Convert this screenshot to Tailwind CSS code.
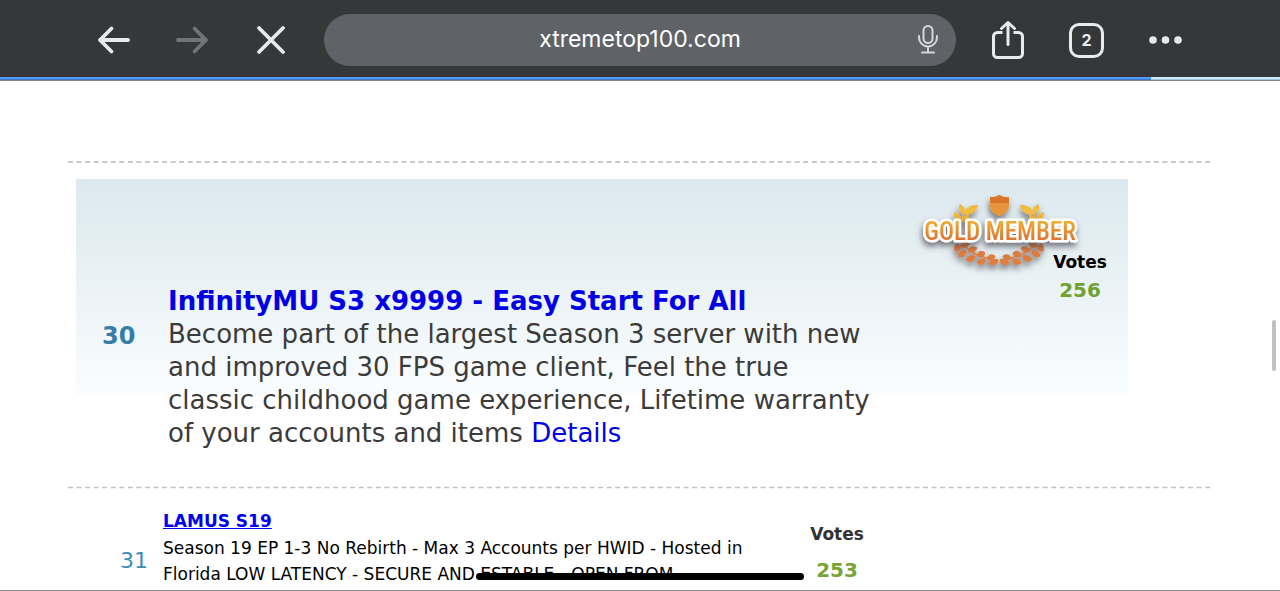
<!DOCTYPE html>
<html lang="en">
<head>
    <meta charset="UTF-8">
    <meta name="viewport" content="width=device-width, initial-scale=1.0">
    <title>xtremetop100.com</title>
    <script src="https://cdn.jsdelivr.net/npm/@tailwindcss/browser@4"></script>
</head>
<body class="relative h-screen overflow-hidden flex flex-col bg-white font-['Verdana','DejaVu_Sans',sans-serif]">

    <!-- Browser toolbar -->
    <header class="shrink-0 bg-[#363739] text-[#e8eaed]">
      <div class="flex items-center h-[77px] pt-[3px] pl-[97px] pr-[97px]">
        <button type="button" aria-label="Back">
          <svg class="w-[33px] h-8" viewBox="0 0 33 32" fill="none" stroke="currentColor" stroke-width="3.8" stroke-linecap="round" stroke-linejoin="round">
            <path d="M31 16H3M14.500 4.500L3 16l11.500 11.500"/>
          </svg>
        </button>
        <button type="button" aria-label="Forward" class="ml-[46px] text-[#737476]" disabled>
          <svg class="w-[33px] h-8" viewBox="0 0 33 32" fill="none" stroke="currentColor" stroke-width="3.8" stroke-linecap="round" stroke-linejoin="round">
            <path d="M2 16h28M18.500 4.500L30 16 18.500 27.500"/>
          </svg>
        </button>
        <button type="button" aria-label="Stop" class="ml-[46px]">
          <svg class="w-8 h-8" viewBox="0 0 32 32" fill="none" stroke="currentColor" stroke-width="3.8" stroke-linecap="round">
            <path d="M4 4l24 24M28 4L4 28"/>
          </svg>
        </button>
        <div class="flex-1 flex items-center h-[52px] ml-[37px] pr-4 rounded-full bg-[#5f6267]">
          <input type="text" aria-label="Address" value="xtremetop100.com"
                 class="flex-1 min-w-0 pl-[40px] pb-[3px] text-center text-[23px] leading-8 text-white font-['Inter','Roboto',sans-serif] outline-none">
          <button type="button" aria-label="Voice search">
            <svg class="w-[24px] h-[32px]" viewBox="0 0 24 32" fill="none" stroke="#d5d7da" stroke-width="2" stroke-linecap="round">
              <rect x="7.500" y="2" width="9" height="17" rx="4.500"/>
              <path d="M3 12v1.500a9 9 0 0 0 18 0V12M12 22.500V28M6 28.500h12"/>
            </svg>
          </button>
        </div>
        <button type="button" aria-label="Share" class="ml-[34px]">
          <svg class="w-9 h-10" viewBox="0 0 36 40" fill="none" stroke="currentColor" stroke-width="3" stroke-linecap="round" stroke-linejoin="round">
            <path d="M12.500 12.500H7.500a4 4 0 0 0-4 4v17a4 4 0 0 0 4 4h21a4 4 0 0 0 4-4v-17a4 4 0 0 0-4-4h-5" stroke-linecap="butt"/>
            <path d="M18 24.500V3M11.500 8.500L18 2.500l6.500 6"/>
          </svg>
        </button>
        <button type="button" aria-label="Tabs"
                class="flex items-center justify-center w-[35px] h-[35px] ml-[43px] border-[3px] border-[#e8eaed] rounded-[10px] text-base font-bold font-['Inter','Roboto',sans-serif]">2</button>
        <button type="button" aria-label="More" class="ml-[44px]">
          <svg class="w-[35px] h-4" viewBox="0 0 35 16" fill="currentColor">
            <circle cx="5" cy="8" r="3.800"/><circle cx="17.500" cy="8" r="3.800"/><circle cx="30" cy="8" r="3.800"/>
          </svg>
        </button>
      </div>
      <!-- Page load progress -->
      <div class="h-[3px] bg-linear-to-b from-[#c8eafc] from-50% to-[#8fb0c4]">
        <div class="h-full bg-linear-to-b from-[#4f9bfb] from-50% to-[#2f68b4]" style="width: 89.900%"></div>
      </div>
      <div class="h-px bg-[#8a8480]"></div>
    </header>

    <main class="flex-1 min-h-0 pt-[79px] pl-[68px] pr-[70px] overflow-hidden border-b border-[#888]">
      <svg class="block w-full h-[3px]"><line x1="0" y1="2" x2="100%" y2="2" stroke="#c9cac2" stroke-width="2" stroke-dasharray="5 3.550"/></svg>

      <!-- Rank 30 -->
      <article class="flex mt-4 ml-2 mr-[82px] h-[307px] bg-[linear-gradient(#dce9f0,#e6f0f3_80px,#f0f6f9_145px,#fafdff_216px,transparent_216px)]">
        <div class="shrink-0 w-[92px] pt-[139px] pl-[26px] text-2xl leading-[36px] font-bold text-[#347ea8]">30</div>
        <div class="flex-1 pt-[106px] text-[26px] leading-[33px] text-[#3b3b3b] whitespace-nowrap">
          <h2><a href="#" class="font-bold text-[#0000e6]">InfinityMU S3 x9999 - Easy Start For All</a></h2>
          <p>Become part of the largest Season 3 server with new<br>
            and improved 30 FPS game client, Feel the true<br>
            classic childhood game experience, Lifetime warranty<br>
            of your accounts and items <a href="#" class="text-[#0000e6]">Details</a></p>
        </div>
        <div class="shrink-0 relative w-[96px] pt-[70px] text-center font-bold">
          <svg class="absolute -left-[117px] top-[6px] w-[170px] h-[95px]" viewBox="915 185 170 95" role="img" aria-label="Gold member">
            <defs>
              <linearGradient id="gold" x1="0" y1="196" x2="0" y2="266" gradientUnits="userSpaceOnUse">
                <stop offset="0" stop-color="#e58a2e"/>
                <stop offset=".18" stop-color="#f3bf3a"/>
                <stop offset=".35" stop-color="#f0b035"/>
                <stop offset=".62" stop-color="#df7430"/>
                <stop offset="1" stop-color="#e08040"/>
              </linearGradient>
              <filter id="shadow" x="-20%" y="-20%" width="140%" height="160%">
                <feDropShadow dx="-1" dy="4" stdDeviation="3" flood-color="#4b4650" flood-opacity=".75"/>
              </filter>
              <g id="branch">
                <path d="M965 212C952 235 962 256 998 260" fill="none" stroke="url(#gold)" stroke-width="1.500"/>
                <path d="M965 215c-1-6 4-10 13-10-1 6-6 10-13 10ZM963 214c-5-3-5-6-3-10 5 3 6 6 3 10ZM960 221c-5-1-6-4-6-9 5 1 8 4 6 9ZM961 222c1-5 4-7 8-7 0 5-3 7-8 7Z"/>
                <path stroke="url(#gold)" d="M958 244c-3 0-4 3-3 7 5 1 7-3 3-7ZM960 246c4-5 7-4 9-2-2 4-5 5-9 2ZM966 251c-5-1-7 2-8 5 5 2 8 0 8-5ZM968 251c2-5 6-5 9-3-2 4-5 5-9 3ZM975 256c-5-1-8 1-9 4 5 3 9 1 9-4ZM977 256c1-5 5-6 8-3-1 4-4 5-8 3ZM985 259c-5 0-8 2-8 4 5 3 9 1 8-4ZM987 259c1-5 5-5 8-3-1 4-4 5-8 3ZM998 260c-5-1-9 1-9 4 5 2 9 0 9-4Z"/>
              </g>
            </defs>
            <g fill="url(#gold)" filter="url(#shadow)">
              <use href="#branch"/>
              <use href="#branch" transform="translate(1998 0) scale(-1 1)"/>
              <path d="M990 197q5 1 9-2 5 3 10 2v9q0 6-10 10-9-4-9-10Z"/>
            </g>
            <path d="M990 197q5 1 9-2 5 3 10 2v9q0 6-10 10-9-4-9-10Z" fill="#e8943a"/>
            <path d="M990 197q5 1 9-2 5 3 10 2v6h-19Z" fill="#da7529"/>
            <text x="1000" y="240" text-anchor="middle" font-family="Roboto Condensed, sans-serif" font-size="25" font-weight="500" fill="url(#gold)" stroke="#fff" stroke-width="5" stroke-linejoin="round" paint-order="stroke" filter="url(#shadow)">GOLD MEMBER</text>
          </svg>
          <div class="relative text-[17px] leading-[27px] text-black">Votes</div>
          <div class="relative text-[20px] leading-[28px] text-[#71a12f]">256</div>
        </div>
      </article>

      <svg class="block w-full h-[3px]"><line x1="0" y1="1.500" x2="100%" y2="1.500" stroke="#c2c3ba" stroke-width="1.400" stroke-dasharray="5 3.550"/></svg>

      <!-- Rank 31 -->
      <article class="flex pt-[19px]">
        <div class="shrink-0 w-[95px] pt-[38px] pl-[52px] text-[22px] leading-[30px] text-[#3c8dba]">31</div>
        <div class="shrink-0 w-[620px] text-[17px] leading-[26px] text-black whitespace-nowrap">
          <h2 class="mb-px"><a href="#" class="font-bold underline text-[#0000f0]">LAMUS S19</a></h2>
          <p>Season 19 EP 1-3 No Rebirth - Max 3 Accounts per HWID - Hosted in<br>
            Florida LOW LATENCY - SECURE AND ESTABLE - OPEN FROM</p>
        </div>
        <div class="w-[108px] pt-[13px] text-center font-bold">
          <div class="text-[17px] leading-[27px] text-[#303234]">Votes</div>
          <div class="mt-2 text-[20px] leading-[28px] text-[#78a436]">253</div>
        </div>
      </article>
    </main>

    <!-- Scroll thumb and home indicator -->
    <div class="absolute right-1 top-[320px] w-[4px] h-[51px] rounded-full bg-[#c1c1c1]"></div>
    <div class="absolute left-1/2 -translate-x-1/2 bottom-[11px] w-[328px] h-[7px] rounded-full bg-black"></div>

</body>
</html>
